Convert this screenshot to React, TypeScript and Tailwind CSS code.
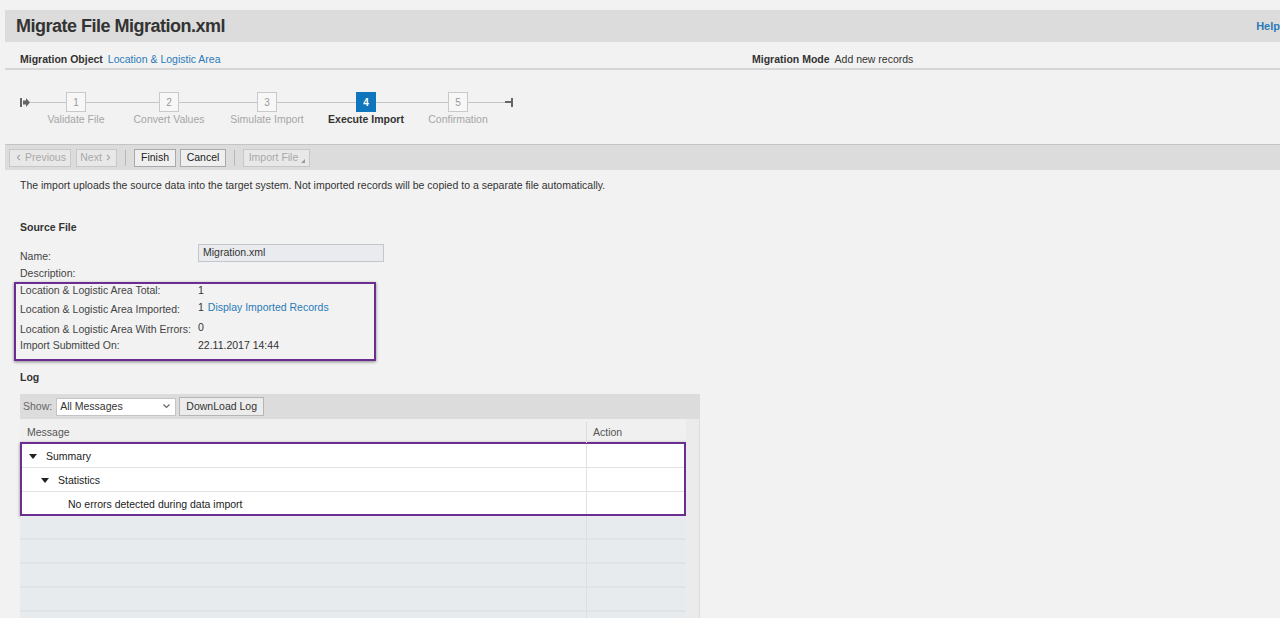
import { ChevronLeft, ChevronRight } from "lucide-react";

function Step({ n, label, active }: { n: number; label: string; active?: boolean }) {
  return (
    <div className="flex w-[20px] flex-col items-center">
      <div
        className={
          active
            ? "grid h-[20px] w-[20px] place-items-center bg-[#0f76bd] text-[10px] font-bold text-white"
            : "grid h-[20px] w-[20px] place-items-center border border-[#c9c9c9] bg-[#f7f7f7] text-[10px] text-[#999]"
        }
      >
        {n}
      </div>
      <div
        className={
          active
            ? "whitespace-nowrap text-[10.5px] font-bold leading-[14px] text-[#333]"
            : "whitespace-nowrap text-[10.5px] leading-[14px] text-[#a6a6a6]"
        }
      >
        {label}
      </div>
    </div>
  );
}

function Line({ w }: { w: string }) {
  return (
    <div className="flex h-[20px] items-center">
      <div className={`h-px bg-[#c6c6c6] ${w}`} />
    </div>
  );
}

function Tri() {
  return (
    <svg width="8" height="5" viewBox="0 0 8 5" className="shrink-0">
      <path d="M0 0h8L4 5z" fill="#222" />
    </svg>
  );
}

const fields = [
  { label: "Location & Logistic Area Total:", value: "1", h: "h-[12px]" },
  { label: "Location & Logistic Area Imported:", value: "1", link: "Display Imported Records", h: "h-[26px]", up: true },
  { label: "Location & Logistic Area With Errors:", value: "0", h: "h-[14px]", up: true },
  { label: "Import Submitted On:", value: "22.11.2017 14:44", h: "h-[18px]" },
];

export default function App() {
  return (
    <div className="h-[618px] overflow-hidden bg-[#f2f2f2] pl-[5px] pt-[10px] font-['Liberation_Sans',Arial,sans-serif] text-[10.5px] text-[#333]">
      {/* header */}
      <div className="flex h-[32px] items-center justify-between overflow-hidden bg-[#dcdcdc] pl-[11px]">
        <h1 className="text-[18px] font-bold leading-none tracking-[-0.5px] text-[#333]">Migrate File Migration.xml</h1>
        <span className="text-[11px] font-bold text-[#2a7ab8]">Help</span>
      </div>

      <div className="flex border-b-2 border-[#d6d6d6] pb-[1px] pl-[15px] pt-[10px] leading-[15px]">
        <div className="flex w-[732px] gap-[5px]">
          <span className="font-bold">Migration Object</span>
          <span className="text-[#2a7ab8]">Location &amp; Logistic Area</span>
        </div>
        <div className="flex gap-[5px]">
          <span className="font-bold">Migration Mode</span>
          <span>Add new records</span>
        </div>
      </div>

      {/* stepper */}
      <div className="flex items-start pb-[18px] pl-[15px] pt-[22px]">
        <div className="flex h-[20px] items-center">
          <svg width="10" height="9" viewBox="0 0 10 9">
            <rect x="0" y="0" width="2" height="9" fill="#666" />
            <path d="M3 2.5h3V0l4 4.5L6 9V6.5H3z" fill="#666" />
          </svg>
        </div>
        <Line w="w-[36px]" />
        <Step n={1} label="Validate File" />
        <Line w="w-[73px]" />
        <Step n={2} label="Convert Values" />
        <Line w="w-[78px]" />
        <Step n={3} label="Simulate Import" />
        <Line w="w-[79px]" />
        <Step n={4} label="Execute Import" active />
        <Line w="w-[72px]" />
        <Step n={5} label="Confirmation" />
        <Line w="w-[37px]" />
        <div className="flex h-[20px] items-center">
          <div className="h-[2px] w-[6px] bg-[#666]" />
          <div className="h-[9px] w-[2px] bg-[#666]" />
        </div>
      </div>

      {/* toolbar */}
      <div className="flex h-[26px] items-center border-t border-[#c4c4c4] bg-[#dcdcdc] pl-[4px]">
        <button className="flex h-[18px] w-[62px] items-center justify-center gap-[2px] border border-[#c8c8c8] bg-[#e8e8e8] text-[10.5px] text-[#a8a8a8]">
          <ChevronLeft size={9} strokeWidth={3} />
          Previous
        </button>
        <button className="ml-[5px] flex h-[18px] w-[41px] items-center justify-center gap-[2px] border border-[#c8c8c8] bg-[#e8e8e8] text-[10.5px] text-[#a8a8a8]">
          Next
          <ChevronRight size={9} strokeWidth={3} />
        </button>
        <div className="mx-[8px] h-[16px] w-px bg-[#b8b8b8]" />
        <button className="h-[18px] w-[42px] border border-[#a9a9a9] bg-[#efefef] text-[10.5px] text-[#222]">Finish</button>
        <button className="ml-[4px] h-[18px] w-[46px] border border-[#a9a9a9] bg-[#efefef] text-[10.5px] text-[#222]">Cancel</button>
        <div className="mx-[8px] h-[16px] w-px bg-[#b8b8b8]" />
        <button className="relative h-[18px] w-[67px] border border-[#c8c8c8] bg-[#e8e8e8] pr-[6px] text-[10.5px] text-[#a8a8a8]">
          Import File
          <svg width="4" height="4" viewBox="0 0 4 4" className="absolute bottom-[3px] right-[4px]">
            <path d="M4 0v4H0z" fill="#999" />
          </svg>
        </button>
      </div>

      <div className="pl-[15px]">
        <p className="pt-[8px] leading-[14px]">
          The import uploads the source data into the target system. Not imported records will be copied to a separate file automatically.
        </p>

        <h2 className="mt-[28px] font-bold leading-[14px]">Source File</h2>

        <div className="mt-[10px] flex h-[18px]">
          <span className="w-[178px] pt-[5px] leading-[14px] text-[#444]">Name:</span>
          <div className="flex h-[18px] w-[186px] items-center border border-[#c3c6ca] bg-[#e9ebee] px-[4px] text-[#333]">
            Migration.xml
          </div>
        </div>
        <div className="mt-[4px] h-[14px] leading-[14px] text-[#444]">Description:</div>

        <div className="-ml-[6px] mt-[2px] w-[362px] border-2 border-[#6b2d90] pb-[5px] pl-[4px] shadow-[0_1px_3px_rgba(0,0,0,0.45)]">
          {fields.map((f) => (
            <div key={f.label} className={`flex items-center leading-[12px] ${f.h}`}>
              <span className="w-[178px] whitespace-nowrap text-[#444]">{f.label}</span>
              <span className={f.up ? "mb-[4px]" : ""}>
                {f.value}
                {f.link && <span className="ml-[4px] text-[#2a7ab8]">{f.link}</span>}
              </span>
            </div>
          ))}
        </div>

        <h2 className="mt-[9px] font-bold leading-[14px]">Log</h2>

        {/* log panel */}
        <div className="mt-[10px] w-[680px]">
          <div className="flex h-[25px] items-center gap-[3px] bg-[#dcdcdc] pl-[3px]">
            <span className="text-[#666]">Show:</span>
            <div className="ml-[1px] flex h-[18px] w-[120px] items-center justify-between border border-[#c4c4c4] bg-white pl-[3px] pr-[5px]">
              <span>All Messages</span>
              <svg width="7" height="5" viewBox="0 0 7 5">
                <path d="M0.5 0.5l3 3 3-3" stroke="#666" strokeWidth="1.2" fill="none" />
              </svg>
            </div>
            <button className="h-[19px] w-[85px] border border-[#b5b5b5] bg-[#ececec] text-[10.5px] text-[#333]">DownLoad Log</button>
          </div>

          <div className="flex">
            <div className="w-[666px]">
              <div className="flex h-[24px] bg-[#f0f0f0] pt-[3px] text-[#555]">
                <div className="flex w-[566px] items-center pl-[7px]">Message</div>
                <div className="flex items-center border-l border-[#dcdcdc] pl-[6px]">Action</div>
              </div>

              <div className="-mt-px border-2 border-[#6b2d90] bg-white shadow-[0_1px_3px_rgba(0,0,0,0.45)]">
                <div className="flex h-[24px] border-b border-[#e2e2e2]">
                  <div className="flex w-[564px] items-center gap-[9px] pl-[7px] pt-[2px] text-[#222]">
                    <Tri />
                    Summary
                  </div>
                  <div className="border-l border-[#e2e2e2]" />
                </div>
                <div className="flex h-[24px] border-b border-[#e2e2e2]">
                  <div className="flex w-[564px] items-center gap-[9px] pl-[19px] pt-[2px] text-[#222]">
                    <Tri />
                    Statistics
                  </div>
                  <div className="border-l border-[#e2e2e2]" />
                </div>
                <div className="flex h-[22px]">
                  <div className="flex w-[564px] items-center pl-[46px] pt-[3px] text-[#222]">No errors detected during data import</div>
                  <div className="border-l border-[#e2e2e2]" />
                </div>
              </div>

              {[0, 1, 2, 3, 4].map((i) => (
                <div key={i} className="flex h-[24px] border-b-2 border-[#e0e3e6] bg-[#e8ebee]">
                  <div className="w-[566px]" />
                  <div className="border-l border-[#dcdfe2]" />
                </div>
              ))}
            </div>
            <div className="w-[14px] border-r border-[#dcdcdc] bg-[#ebebeb]" />
          </div>
        </div>
      </div>
    </div>
  );
}
